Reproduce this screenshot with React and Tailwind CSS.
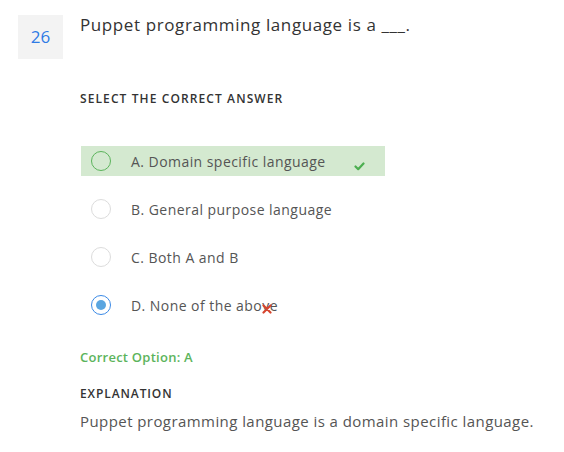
import React from 'react';

const options = [
  { key: 'A', text: 'A. Domain specific language', correct: true },
  { key: 'B', text: 'B. General purpose language' },
  { key: 'C', text: 'C. Both A and B' },
  { key: 'D', text: 'D. None of the above', selected: true },
];

const Radio = ({ correct, selected }) => {
  if (selected) {
    return (
      <span className="w-[20px] h-[20px] rounded-full border-[1.5px] border-[#3b8ae6] flex items-center justify-center shrink-0">
        <span className="w-[10px] h-[10px] rounded-full bg-[#5aa5e0]" />
      </span>
    );
  }
  return (
    <span
      className={`w-[20px] h-[20px] rounded-full shrink-0 ${
        correct ? 'border-[1.5px] border-[#5cb45c]' : 'border border-[#dcdcdc] bg-white'
      }`}
    />
  );
};

export default function App() {
  return (
    <div
      className="w-[564px] h-[452px] bg-white text-[#333]"
      style={{ fontFamily: '"Open Sans", "Liberation Sans", sans-serif' }}
    >
      {/* Question header */}
      <div className="flex pl-[18px] pt-[15px]">
        <div className="w-[45px] h-[44px] bg-[#f3f3f3] flex items-center justify-center text-[17px] text-[#2f7be5]">
          26
        </div>
        <div className="ml-[17px] text-[17px] leading-[20px] tracking-[0.6px] text-[#333]">
          Puppet programming language is a ___.
        </div>
      </div>

      {/* Options */}
      <div className="pl-[80px] mt-[32px]">
        <div className="text-[12px] leading-[16px] font-semibold tracking-[1.1px] text-[#333]">
          SELECT THE CORRECT ANSWER
        </div>
        <div className="mt-[39px] flex flex-col gap-[18px] pl-[1px]">
          {options.map((o) => (
            <div
              key={o.key}
              className={`w-[304px] h-[30px] flex items-center pl-[10px] ${
                o.correct ? 'bg-[#d4e9d0]' : ''
              }`}
            >
              <Radio correct={o.correct} selected={o.selected} />
              <span className="ml-[20px] relative text-[14px] tracking-[0.45px] text-[#555]">
                {o.text}
                {o.selected && (
                  <svg
                    className="absolute right-[6px] top-[9px]"
                    width="10"
                    height="10"
                    viewBox="0 0 10 10"
                  >
                    <path d="M1.5 1.5 L8.5 8.5 M8.5 1.5 L1.5 8.5" stroke="#d6452f" strokeWidth="2.2" strokeLinecap="round" />
                  </svg>
                )}
              </span>
              {o.correct && (
                <svg className="ml-auto mr-[20px] mt-[10px]" width="11" height="9" viewBox="0 0 11 9">
                  <path d="M1.5 4.5 L4.2 7.2 L9.5 1.5" fill="none" stroke="#4caf50" strokeWidth="2.2" strokeLinecap="round" strokeLinejoin="round" />
                </svg>
              )}
            </div>
          ))}
        </div>

        <div className="mt-[29px] text-[13px] leading-[16px] font-semibold tracking-[0.25px] text-[#5cb45c]">
          Correct Option: A
        </div>
        <div className="mt-[21px] text-[12px] leading-[16px] font-semibold tracking-[0.9px] text-[#333]">
          EXPLANATION
        </div>
        <div className="mt-[9px] text-[15px] leading-[20px] tracking-[0.43px] text-[#555]">
          Puppet programming language is a domain specific language.
        </div>
      </div>
    </div>
  );
}
